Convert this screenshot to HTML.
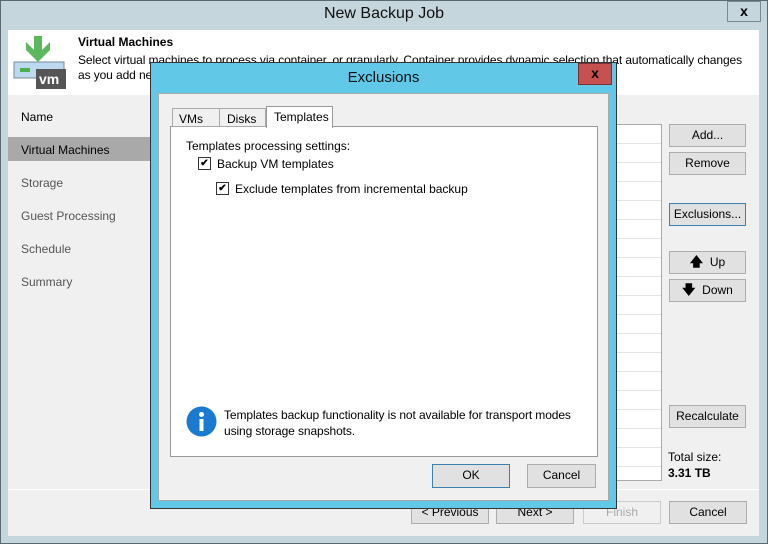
<!DOCTYPE html>
<html><head><style>
*{box-sizing:border-box;margin:0;padding:0}
body{width:768px;height:544px;position:relative;overflow:hidden;font-family:"Liberation Sans",sans-serif;font-size:12px;color:#000;background:#c5d6dc}
.a{position:absolute}
.btn{position:absolute;background:#e1e1e1;border:1px solid #adadad;text-align:center;line-height:20px;font-size:12px}
.cb{position:absolute;width:13px;height:13px;border:1px solid #333;background:#fff;font-size:10px;line-height:11px;text-align:center;font-weight:bold}
</style></head><body>
<div class="a" style="left:0;top:0;width:768px;height:544px;border:1px solid #5a6a72;background:#c5d6dc"></div>
<div class="a" style="left:0;top:5px;width:768px;text-align:center;font-size:16px;color:#111">New Backup Job</div>
<div class="a" style="left:727px;top:1px;width:34px;height:21px;border:1px solid #7a8a90;text-align:center;font-weight:bold;font-size:14px;line-height:19px">x</div>
<div class="a" style="left:8px;top:30px;width:751px;height:506px;background:#f0f0f0"></div>
<div class="a" style="left:8px;top:30px;width:751px;height:65px;background:#fff"></div>
<svg class="a" style="left:12px;top:36px" width="56" height="54">
<rect x="2" y="26" width="50" height="16" fill="#bcd9f0" stroke="#7a8a96"/>
<rect x="8" y="32" width="10" height="4" fill="#4cae4c"/>
<path d="M22 0h8v14l8-8v8l-12 12l-12-12v-8l8 8z" fill="#5cb85c"/>
<rect x="24" y="33" width="30" height="20" fill="#555"/>
<text x="27" y="48" fill="#fff" font-size="14" font-weight="bold" font-family="Liberation Sans">vm</text>
</svg>
<div class="a" style="left:78px;top:35px;font-weight:bold">Virtual Machines</div>
<div class="a" style="left:78px;top:53px;width:676px;line-height:15px;letter-spacing:-0.1px">Select virtual machines to process via container, or granularly. Container provides dynamic selection that automatically changes as you add new VMs to the container.</div>
<div class="a" style="left:21px;top:110px">Name</div>
<div class="a" style="left:8px;top:137px;width:152px;height:24px;background:#a9a9a9"></div>
<div class="a" style="left:21px;top:143px">Virtual Machines</div>
<div class="a" style="left:21px;top:176px;color:#555">Storage</div>
<div class="a" style="left:21px;top:209px;color:#555">Guest Processing</div>
<div class="a" style="left:21px;top:242px;color:#555">Schedule</div>
<div class="a" style="left:21px;top:275px;color:#555">Summary</div>
<div class="a" style="left:560px;top:124px;width:102px;height:357px;background:#fff;border:1px solid #aaa;background-image:repeating-linear-gradient(#fff 0 18px,#e4e4e4 18px 19px)"></div>
<div class="btn" style="left:669px;top:124px;width:77px;height:23px">Add...</div>
<div class="btn" style="left:669px;top:152px;width:77px;height:23px">Remove</div>
<div class="btn" style="left:669px;top:203px;width:77px;height:23px;border-color:#3c7fb1">Exclusions...</div>
<div class="btn" style="left:669px;top:251px;width:77px;height:23px"><b style="font-size:13px">&#129093;</b>&nbsp; Up</div>
<div class="btn" style="left:669px;top:279px;width:77px;height:23px"><b style="font-size:13px">&#129095;</b>&nbsp; Down</div>
<div class="btn" style="left:669px;top:405px;width:77px;height:23px">Recalculate</div>
<div class="a" style="left:668px;top:450px">Total size:</div>
<div class="a" style="left:668px;top:466px;font-weight:bold">3.31 TB</div>
<div class="a" style="left:8px;top:489px;width:751px;height:1px;background:#fff"></div>
<div class="btn" style="left:411px;top:501px;width:78px;height:23px">&lt; Previous</div>
<div class="btn" style="left:496px;top:501px;width:78px;height:23px">Next &gt;</div>
<div class="btn" style="left:583px;top:501px;width:78px;height:23px;color:#aaa;background:#f0f0f0;border-color:#ccc">Finish</div>
<div class="btn" style="left:669px;top:501px;width:78px;height:23px">Cancel</div>

<div class="a" style="left:150px;top:62px;width:467px;height:447px;background:#62c8e8;border:1px solid #333"></div>
<div class="a" style="left:150px;top:69px;width:467px;text-align:center;font-size:15px;color:#111">Exclusions</div>
<div class="a" style="left:578px;top:63px;width:34px;height:22px;background:#c75050;border:1px solid #7a3030;text-align:center;font-weight:bold;font-size:14px;line-height:19px">x</div>
<div class="a" style="left:158px;top:93px;width:451px;height:408px;background:#f0f0f0;border:1px solid #aaa"></div>
<div class="a" style="left:170px;top:126px;width:428px;height:331px;background:#fff;border:1px solid #999"></div>
<div class="a" style="left:172px;top:108px;width:48px;height:19px;background:#f0f0f0;border:1px solid #aaa;padding:3px 0 0 6px">VMs</div>
<div class="a" style="left:219px;top:108px;width:47px;height:19px;background:#f0f0f0;border:1px solid #aaa;padding:3px 0 0 7px">Disks</div>
<div class="a" style="left:266px;top:106px;width:67px;height:22px;background:#fff;border:1px solid #999;border-bottom:none;padding:3px 0 0 7px">Templates</div>
<div class="a" style="left:186px;top:139px">Templates processing settings:</div>
<div class="cb" style="left:198px;top:157px">&#10004;</div>
<div class="a" style="left:217px;top:157px">Backup VM templates</div>
<div class="cb" style="left:216px;top:182px">&#10004;</div>
<div class="a" style="left:235px;top:182px">Exclude templates from incremental backup</div>
<svg class="a" style="left:186px;top:406px" width="31" height="31"><circle cx="15.5" cy="15.5" r="15" fill="#1a7ad0"/><circle cx="15.5" cy="8.5" r="2.5" fill="#fff"/><rect x="13.5" y="13" width="4" height="12" fill="#fff"/></svg>
<div class="a" style="left:224px;top:407px;line-height:16px;letter-spacing:-0.1px">Templates backup functionality is not available for transport modes<br>using storage snapshots.</div>
<div class="btn" style="left:432px;top:464px;width:78px;height:24px;border-color:#3c7fb1">OK</div>
<div class="btn" style="left:527px;top:464px;width:69px;height:24px">Cancel</div>
</body></html>
